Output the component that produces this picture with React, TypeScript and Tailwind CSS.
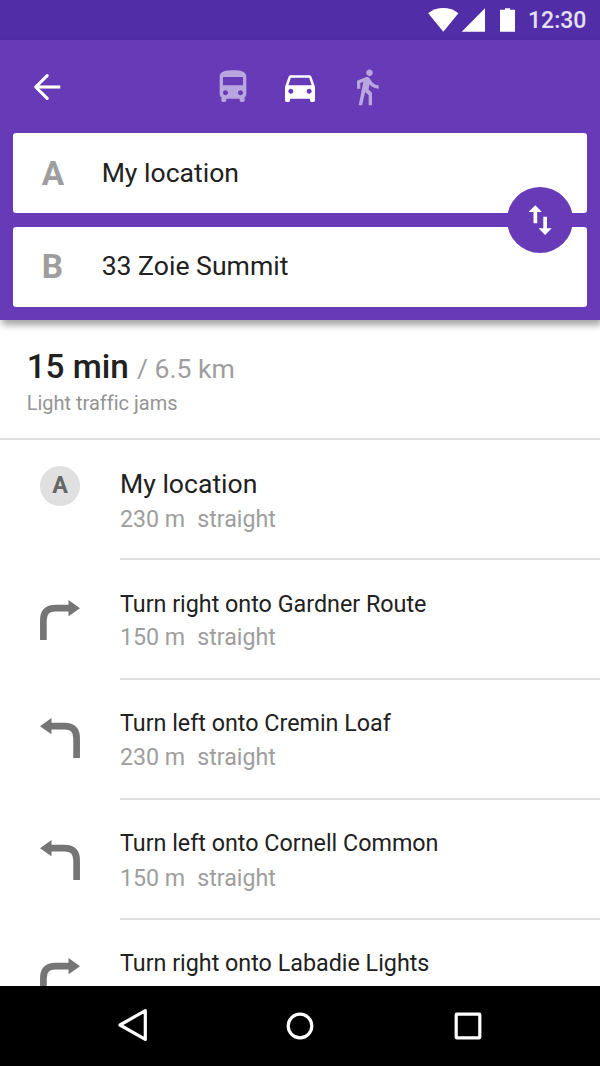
import type { ReactNode } from 'react';

type Step = {
  icon: 'start' | 'right' | 'left';
  title: string;
  distance?: string;
  titleClass: string;
  detailClass: string;
  iconClass: string;
};

const steps: Step[] = [
  {
    icon: 'start',
    title: 'My location',
    distance: '230 m',
    titleClass: 'mt-[28px] text-[26.6px]',
    detailClass: 'mt-[3px]',
    iconClass: 'pt-[26px]',
  },
  {
    icon: 'right',
    title: 'Turn right onto Gardner Route',
    distance: '150 m',
    titleClass: 'mt-[28px] text-[23.3px]',
    detailClass: 'mt-[1px]',
    iconClass: 'pt-[40px]',
  },
  {
    icon: 'left',
    title: 'Turn left onto Cremin Loaf',
    distance: '230 m',
    titleClass: 'mt-[27px] text-[23.3px]',
    detailClass: 'mt-[2px]',
    iconClass: 'pt-[38px]',
  },
  {
    icon: 'left',
    title: 'Turn left onto Cornell Common',
    distance: '150 m',
    titleClass: 'mt-[27px] text-[23.3px]',
    detailClass: 'mt-[3px]',
    iconClass: 'pt-[39.5px]',
  },
  {
    icon: 'right',
    title: 'Turn right onto Labadie Lights',
    titleClass: 'mt-[27px] text-[23.3px]',
    detailClass: 'mt-[1px]',
    iconClass: 'pt-[38px]',
  },
];

function StatusBar() {
  return (
    <div className="flex h-10 shrink-0 items-center justify-end bg-[#512da8] pr-[14px]">
      <svg className="h-10 w-[92px]" viewBox="426 0 92 40" fill="#fff">
        <path d="M443.3 31.7 428.2 13.2C432.3 9.9 437.6 8 443.3 8s11 1.900 15.100 5.200z" />
        <path d="M485 8.300V31.700H461.700z" />
        <path d="M505 8.300h5v1.500h5v21.900h-15V9.800h5z" />
      </svg>
      <span className="ml-[10px] w-[58px] pt-px text-[23px] leading-[39px] font-medium whitespace-nowrap text-white/85">12:30</span>
    </div>
  );
}

function Toolbar() {
  return (
    <div className="flex h-[93.33px] items-start pt-[26.67px] pl-[26.67px]">
      <svg className="h-10 w-10" viewBox="0 0 40 40" fill="none" stroke="#fff" strokeWidth="3.1">
        <path d="M33.300 20H9" />
        <path d="M20.200 8.600 8.700 20l11.500 11.400" strokeLinejoin="round" strokeLinecap="round" />
      </svg>
      <svg className="ml-[146.67px] h-10 w-10 opacity-55" viewBox="0 0 24 24" fill="#fff">
        <path d="M4 16c0 .88.39 1.67 1 2.22V20c0 .55.45 1 1 1h1c.55 0 1-.45 1-1v-1h8v1c0 .55.45 1 1 1h1c.55 0 1-.45 1-1v-1.78c.61-.55 1-1.34 1-2.22V6c0-3.5-3.58-4-8-4s-8 .5-8 4v10zm3.5 1c-.83 0-1.500-.67-1.500-1.500S6.670 14 7.500 14s1.500.67 1.500 1.500S8.330 17 7.500 17zm9 0c-.83 0-1.500-.67-1.500-1.500s.67-1.500 1.500-1.500 1.500.67 1.500 1.500-.67 1.500-1.500 1.500zm1.500-6H6V6h12v5z" />
      </svg>
      <svg className="ml-[26.67px] h-10 w-10" viewBox="0 0 24 24" fill="#fff">
        <path d="M18.920 6.010C18.720 5.420 18.160 5 17.500 5h-11c-.66 0-1.210.42-1.420 1.010L3 12v8c0 .55.45 1 1 1h1c.55 0 1-.45 1-1v-1h12v1c0 .55.45 1 1 1h1c.55 0 1-.45 1-1v-8l-2.080-5.990zM6.500 16c-.83 0-1.500-.67-1.500-1.500S5.670 13 6.500 13s1.500.67 1.500 1.500S7.330 16 6.500 16zm11 0c-.83 0-1.500-.67-1.500-1.500s.67-1.500 1.500-1.500 1.500.67 1.500 1.500-.67 1.500-1.500 1.500zM5 11l1.500-4.500h11L19 11H5z" />
      </svg>
      <svg className="ml-[26.67px] h-10 w-10 opacity-55" viewBox="0 0 24 24" fill="#fff">
        <path d="M13.500 5.500c1.100 0 2-.9 2-2s-.9-2-2-2-2 .9-2 2 .9 2 2 2zM9.800 8.900L7 23h2.100l1.800-8 2.100 2v6h2v-7.500l-2.100-2 .6-3C14.800 12 16.800 13 19 13v-2c-1.900 0-3.500-1-4.300-2.400l-1-1.600c-.4-.6-1-1-1.700-1-.3 0-.5.1-.8.1L6 8.300V13h2V9.600l1.800-.7" />
      </svg>
    </div>
  );
}

function PlaceField({ letter, children }: { letter: string; children: ReactNode }) {
  return (
    <div className="flex h-20 items-center rounded-[3px] bg-white pl-[28.3px]">
      <span className="w-[60px] pt-px text-[33.33px] leading-10 font-bold text-[#9e9e9e]">{letter}</span>
      <span className="pb-px text-[26.6px] leading-10 text-[#212121]">{children}</span>
    </div>
  );
}

function Header() {
  return (
    <header className="z-10 h-[280px] shrink-0 bg-[#673ab7] shadow-[2px_5px_7px_rgba(0,0,0,0.36)]">
      <Toolbar />
      <div className="relative mx-[13.33px] flex flex-col gap-[13.33px]">
        <PlaceField letter="A">My location</PlaceField>
        <PlaceField letter="B">33 Zoie Summit</PlaceField>
        <button
          aria-label="Swap"
          className="absolute top-[53.33px] right-[13.33px] flex size-[66.67px] items-center justify-center rounded-full bg-[#673ab7]"
        >
          <svg className="h-10 w-10" viewBox="0 0 40 40" fill="#fff">
            <path d="M15.300 5.200 21.900 11.900H17.200V23.300H13.500V11.900H8.600z" />
            <path d="M23.300 16.700H27V28.200H31.700L25.100 34.900 18.500 28.200H23.300z" />
          </svg>
        </button>
      </div>
    </header>
  );
}

function Summary() {
  return (
    <section className="h-[120px] shrink-0 border-b-2 border-[#e0e0e0] pt-[27px] pl-[26.67px]">
      <div className="flex items-baseline leading-10">
        <span className="text-[33.33px] font-medium text-[#212121]">15 min</span>
        <span className="ml-[8px] text-[26.6px] text-[#9e9e9e]">/ 6.5 km</span>
      </div>
      <div className="text-[20px] leading-7 text-[#949494] [font-variant-ligatures:none]">Light traffic jams</div>
    </section>
  );
}

function StepIcon({ icon }: { icon: Step['icon'] }) {
  if (icon === 'start') {
    return (
      <span className="flex size-10 items-center justify-center rounded-full bg-[#e0e0e0] text-[23.33px] leading-none font-bold text-[#666]">
        A
      </span>
    );
  }
  return (
    <svg className={icon === 'left' ? 'size-10 -scale-x-100' : 'size-10'} viewBox="0 0 40 40">
      <path d="M3.400 40V20.500Q3.400 8.200 15.500 8.200H29" fill="none" stroke="#757575" strokeWidth="6.700" />
      <path d="M28.500 0 40 8.200 28.500 16.300z" fill="#757575" />
    </svg>
  );
}

function StepRow({ step }: { step: Step }) {
  return (
    <li className="flex h-[120px] shrink-0">
      <div className={`w-[120px] pl-10 ${step.iconClass}`}>
        <StepIcon icon={step.icon} />
      </div>
      <div className="flex flex-1 flex-col border-b-2 border-[#e0e0e0]">
        <div className={`leading-8 text-[#212121] ${step.titleClass}`}>{step.title}</div>
        {step.distance && (
          <div className={`flex gap-3 text-[23.2px] leading-8 text-[#9e9e9e] ${step.detailClass}`}>
            <span>{step.distance}</span>
            <span>straight</span>
          </div>
        )}
      </div>
    </li>
  );
}

function NavigationBar() {
  return (
    <nav className="flex h-20 shrink-0 items-center justify-between bg-black px-[112px]">
      <svg className="size-10" viewBox="0 0 40 40" fill="none" stroke="#fff" strokeWidth="3.200" strokeLinejoin="round">
        <path d="M33.300 4.600V33.400L8 19z" />
      </svg>
      <svg className="size-10" viewBox="0 0 40 40" fill="none" stroke="#fff" strokeWidth="3.200">
        <circle cx="20" cy="20" r="11.800" />
      </svg>
      <svg className="size-10" viewBox="0 0 40 40" fill="none" stroke="#fff" strokeWidth="3.200" strokeLinejoin="round">
        <rect x="8.200" y="8.200" width="23.600" height="23.600" rx="0.500" />
      </svg>
    </nav>
  );
}

export default function App() {
  return (
    <div className="flex h-[1066px] w-[600px] flex-col overflow-hidden bg-white font-['Roboto',sans-serif]">
      <StatusBar />
      <Header />
      <Summary />
      <ul className="flex min-h-0 flex-1 flex-col overflow-hidden">
        {steps.map((step) => (
          <StepRow key={step.title} step={step} />
        ))}
      </ul>
      <NavigationBar />
    </div>
  );
}
